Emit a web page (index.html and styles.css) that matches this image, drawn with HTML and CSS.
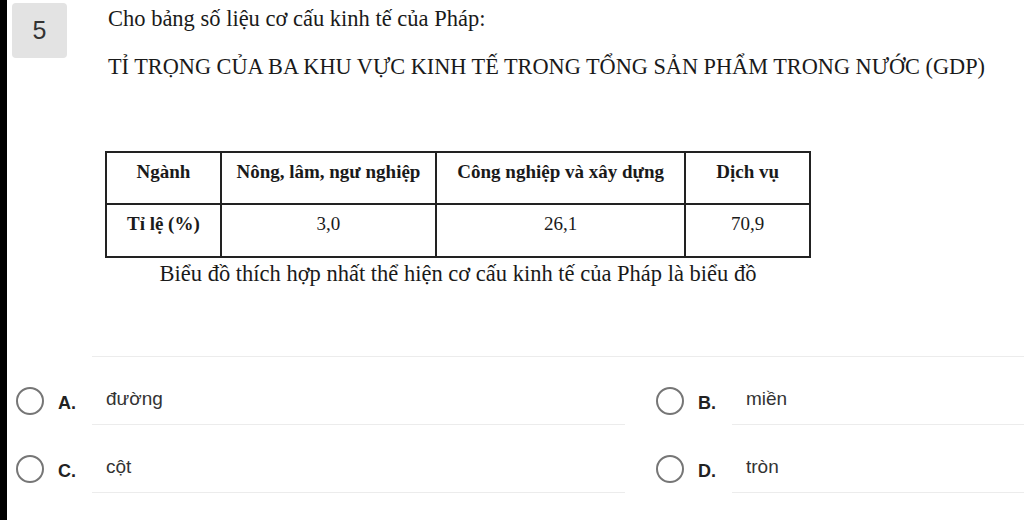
FILE: index.html
```html
<!DOCTYPE html>
<html lang="vi">
<head>
  <meta charset="UTF-8">
  <title>Câu 5</title>
  <link rel="stylesheet" href="styles.css">
</head>
<body>

  <div class="page">
    <div class="question">
      <div class="num">5</div>
      <div class="qbody">
        <p class="lead">Cho bảng số liệu cơ cấu kinh tế của Pháp:</p>
        <p class="title">TỈ TRỌNG CỦA BA KHU VỰC KINH TẾ TRONG TỔNG SẢN PHẨM TRONG NƯỚC (GDP)</p>
        <div class="table-wrap">
          <table class="data">
            <tr>
              <th class="c1">Ngành</th>
              <th class="c2">Nông, lâm, ngư nghiệp</th>
              <th class="c3">Công nghiệp và xây dựng</th>
              <th class="c4">Dịch vụ</th>
            </tr>
            <tr>
              <th>Tỉ lệ (%)</th>
              <td>3,0</td>
              <td>26,1</td>
              <td>70,9</td>
            </tr>
          </table>
          <p class="caption">Biểu đồ thích hợp nhất thể hiện cơ cấu kinh tế của Pháp là biểu đồ</p>
        </div>
      </div>
    </div>

    <div class="divider"></div>

    <div class="options">
      <div class="option">
        <span class="radio"></span>
        <span class="letter">A.</span>
        <span class="answer">đường</span>
      </div>
      <div class="option">
        <span class="radio"></span>
        <span class="letter">B.</span>
        <span class="answer">miền</span>
      </div>
      <div class="option">
        <span class="radio"></span>
        <span class="letter">C.</span>
        <span class="answer">cột</span>
      </div>
      <div class="option">
        <span class="radio"></span>
        <span class="letter">D.</span>
        <span class="answer">tròn</span>
      </div>
    </div>
  </div>

</body>
</html>
```

FILE: styles.css
```css
html, body {
  margin: 0px;
  padding: 0px;
  background-color: #fff;
}
.page {
  border-left: 7px solid #000;
  min-height: 520px;
  box-sizing: border-box;
}
.question {
  display: flex;
  align-items: flex-start;
}
.num {
  width: 55px;
  height: 55px;
  margin: 3px 0 0 5px;
  background-color: #e3e3e3;
  border-radius: 4px;
  display: flex;
  align-items: center;
  justify-content: center;
  font-family: "Liberation Sans", Arial, sans-serif;
  font-size: 25px;
  color: #333;
  flex-shrink: 0;
}
.qbody {
  margin-left: 41px;
  padding-top: 6px;
  font-family: "Liberation Serif", "Times New Roman", serif;
  color: #1a1a1a;
}
.lead, .title, .caption {
  margin: 0;
  font-size: 22.5px;
  line-height: 26px;
}
.title {
  margin-top: 22px;
  font-size: 22.3px;
}
.table-wrap {
  width: 706px;
  margin: 71px 0 0 -3px;
}
.data {
  border-collapse: collapse;
  width: 706px;
  font-size: 19px;
}
.data th, .data td {
  border: 2px solid #222;
  text-align: center;
  vertical-align: top;
  padding: 8px 0 0 0;
  line-height: 22px;
}
.data tr:first-child th {
  height: 42px;
}
.data tr:last-child th, .data tr:last-child td {
  height: 43px;
}
.data td {
  font-weight: normal;
}
.c1 { width: 113px; }
.c2 { width: 214px; }
.c3 { width: 248px; }
.c4 { width: 123px; }
.caption {
  text-align: center;
  margin-top: 3px;
}
.divider {
  margin: 69px 0 0 85px;
  border-top: 1px solid #ececec;
}
.options {
  display: grid;
  grid-template-columns: 609px 1fr;
  column-gap: 31px;
  padding-left: 9px;
}
.option {
  display: flex;
  align-items: flex-start;
  font-family: "Liberation Sans", Arial, sans-serif;
}
.radio {
  width: 24px;
  height: 24px;
  border: 2px solid #767676;
  border-radius: 50%;
  margin-top: 30px;
  flex-shrink: 0;
}
.letter {
  width: 34px;
  margin: 36px 0 0 14px;
  font-size: 18px;
  font-weight: bold;
  line-height: 20px;
  color: #222;
  flex-shrink: 0;
}
.answer {
  flex: 1;
  padding: 31px 0 14px 14px;
  font-size: 19px;
  line-height: 22px;
  color: #333;
  border-bottom: 1px solid #ececec;
}
```
